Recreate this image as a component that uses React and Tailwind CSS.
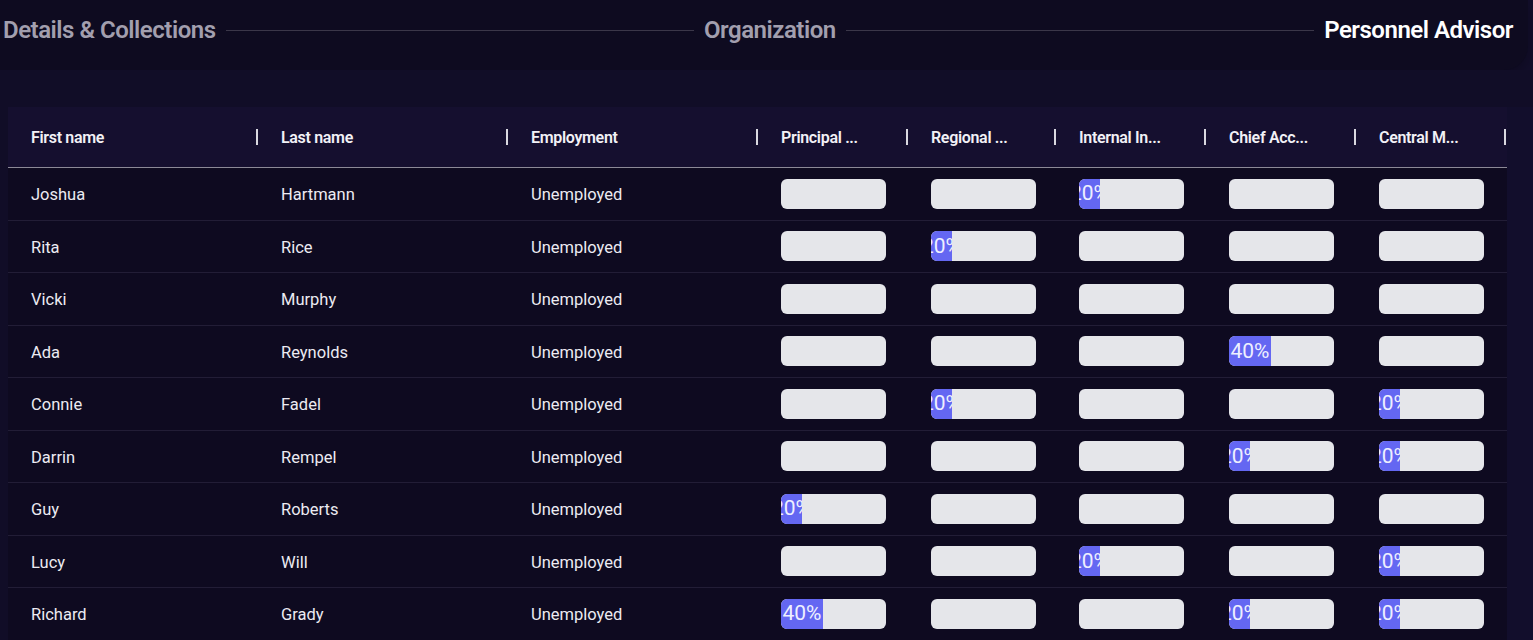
import React from 'react';

const columns = [
  { key: 'first', label: 'First name', width: 'w-[250px]' },
  { key: 'last', label: 'Last name', width: 'w-[250px]' },
  { key: 'employment', label: 'Employment', width: 'w-[250px]' },
  { key: 'p1', label: 'Principal ...', width: 'w-[150px]' },
  { key: 'p2', label: 'Regional ...', width: 'w-[148px]' },
  { key: 'p3', label: 'Internal In...', width: 'w-[150px]' },
  { key: 'p4', label: 'Chief Acc...', width: 'w-[150px]' },
  { key: 'p5', label: 'Central M...', width: 'w-[150px]' },
];

const people = [
  { first: 'Joshua', last: 'Hartmann', scores: [0, 0, 20, 0, 0] },
  { first: 'Rita', last: 'Rice', scores: [0, 20, 0, 0, 0] },
  { first: 'Vicki', last: 'Murphy', scores: [0, 0, 0, 0, 0] },
  { first: 'Ada', last: 'Reynolds', scores: [0, 0, 0, 40, 0] },
  { first: 'Connie', last: 'Fadel', scores: [0, 20, 0, 0, 20] },
  { first: 'Darrin', last: 'Rempel', scores: [0, 0, 0, 20, 20] },
  { first: 'Guy', last: 'Roberts', scores: [20, 0, 0, 0, 0] },
  { first: 'Lucy', last: 'Will', scores: [0, 0, 20, 0, 20] },
  { first: 'Richard', last: 'Grady', scores: [40, 0, 0, 20, 20] },
];

function Step({ label, active }) {
  return (
    <span className={`text-[24px] font-semibold tracking-[-0.02em] whitespace-nowrap ${active ? 'text-white' : 'text-[#a29fae]'}`}>
      {label}
    </span>
  );
}

function Progress({ value }) {
  return (
    <div className="w-[105px] h-[30px] rounded-md bg-[#e5e6ea] overflow-hidden flex">
      {value > 0 && (
        <div
          className="h-full bg-[#6467f2] overflow-hidden flex items-center justify-center"
          style={{ width: `${value}%` }}
        >
          <span className="text-[#eef0ff] text-[21px] leading-none whitespace-nowrap">{value}%</span>
        </div>
      )}
    </div>
  );
}

export default function App() {
  return (
    <div className="min-h-screen bg-[#120e2a] font-['Roboto',sans-serif] text-white">
      {/* Stepper */}
      <div className="h-[70px] bg-[#0e0b20] rounded-br-[24px] shadow-[0_6px_14px_rgba(0,0,0,0.25)] flex items-start pt-[12px] pl-[3px] pr-[15px] w-[1528px]">
        <div className="flex items-center gap-[10px] w-full">
          <Step label="Details & Collections" />
          <div className="flex-1 h-px bg-[#3b3749]" />
          <Step label="Organization" />
          <div className="flex-1 h-px bg-[#3b3749]" />
          <Step label="Personnel Advisor" active />
        </div>
      </div>

      <div className="pt-[37px] pl-[8px] bg-[#110d27] flex">
        <div className="w-[1499px]">
          {/* Header */}
          <div className="h-[61px] bg-[#150f2f] border-b border-[#8c8997] flex items-center">
            {columns.map((c) => (
              <div key={c.key} className={`${c.width} flex items-center justify-between pl-[23px]`}>
                <span className="text-[16px] font-semibold tracking-[-0.02em] text-[#f2f1f6] pt-[1px]">{c.label}</span>
                <div className="w-[2px] h-[16px] bg-[#d9d8e0]" />
              </div>
            ))}
          </div>
          {/* Rows */}
          {people.map((p) => (
            <div key={p.first} className="h-[52.5px] bg-[#0e0a20] border-b border-[#221d36] flex items-center">
              <div className="w-[250px] pl-[23px] pt-[4px] text-[16.5px] text-[#ecebf2]">{p.first}</div>
              <div className="w-[250px] pl-[23px] pt-[4px] text-[16.5px] text-[#ecebf2]">{p.last}</div>
              <div className="w-[250px] pl-[23px] pt-[4px] text-[16.5px] text-[#ecebf2]">Unemployed</div>
              {p.scores.map((s, i) => (
                <div key={i} className={`${i === 1 ? 'w-[148px]' : 'w-[150px]'} pl-[23px]`}>
                  <Progress value={s} />
                </div>
              ))}
            </div>
          ))}
        </div>
        <div className="flex-1 bg-[#120e2c]" />
      </div>
    </div>
  );
}
